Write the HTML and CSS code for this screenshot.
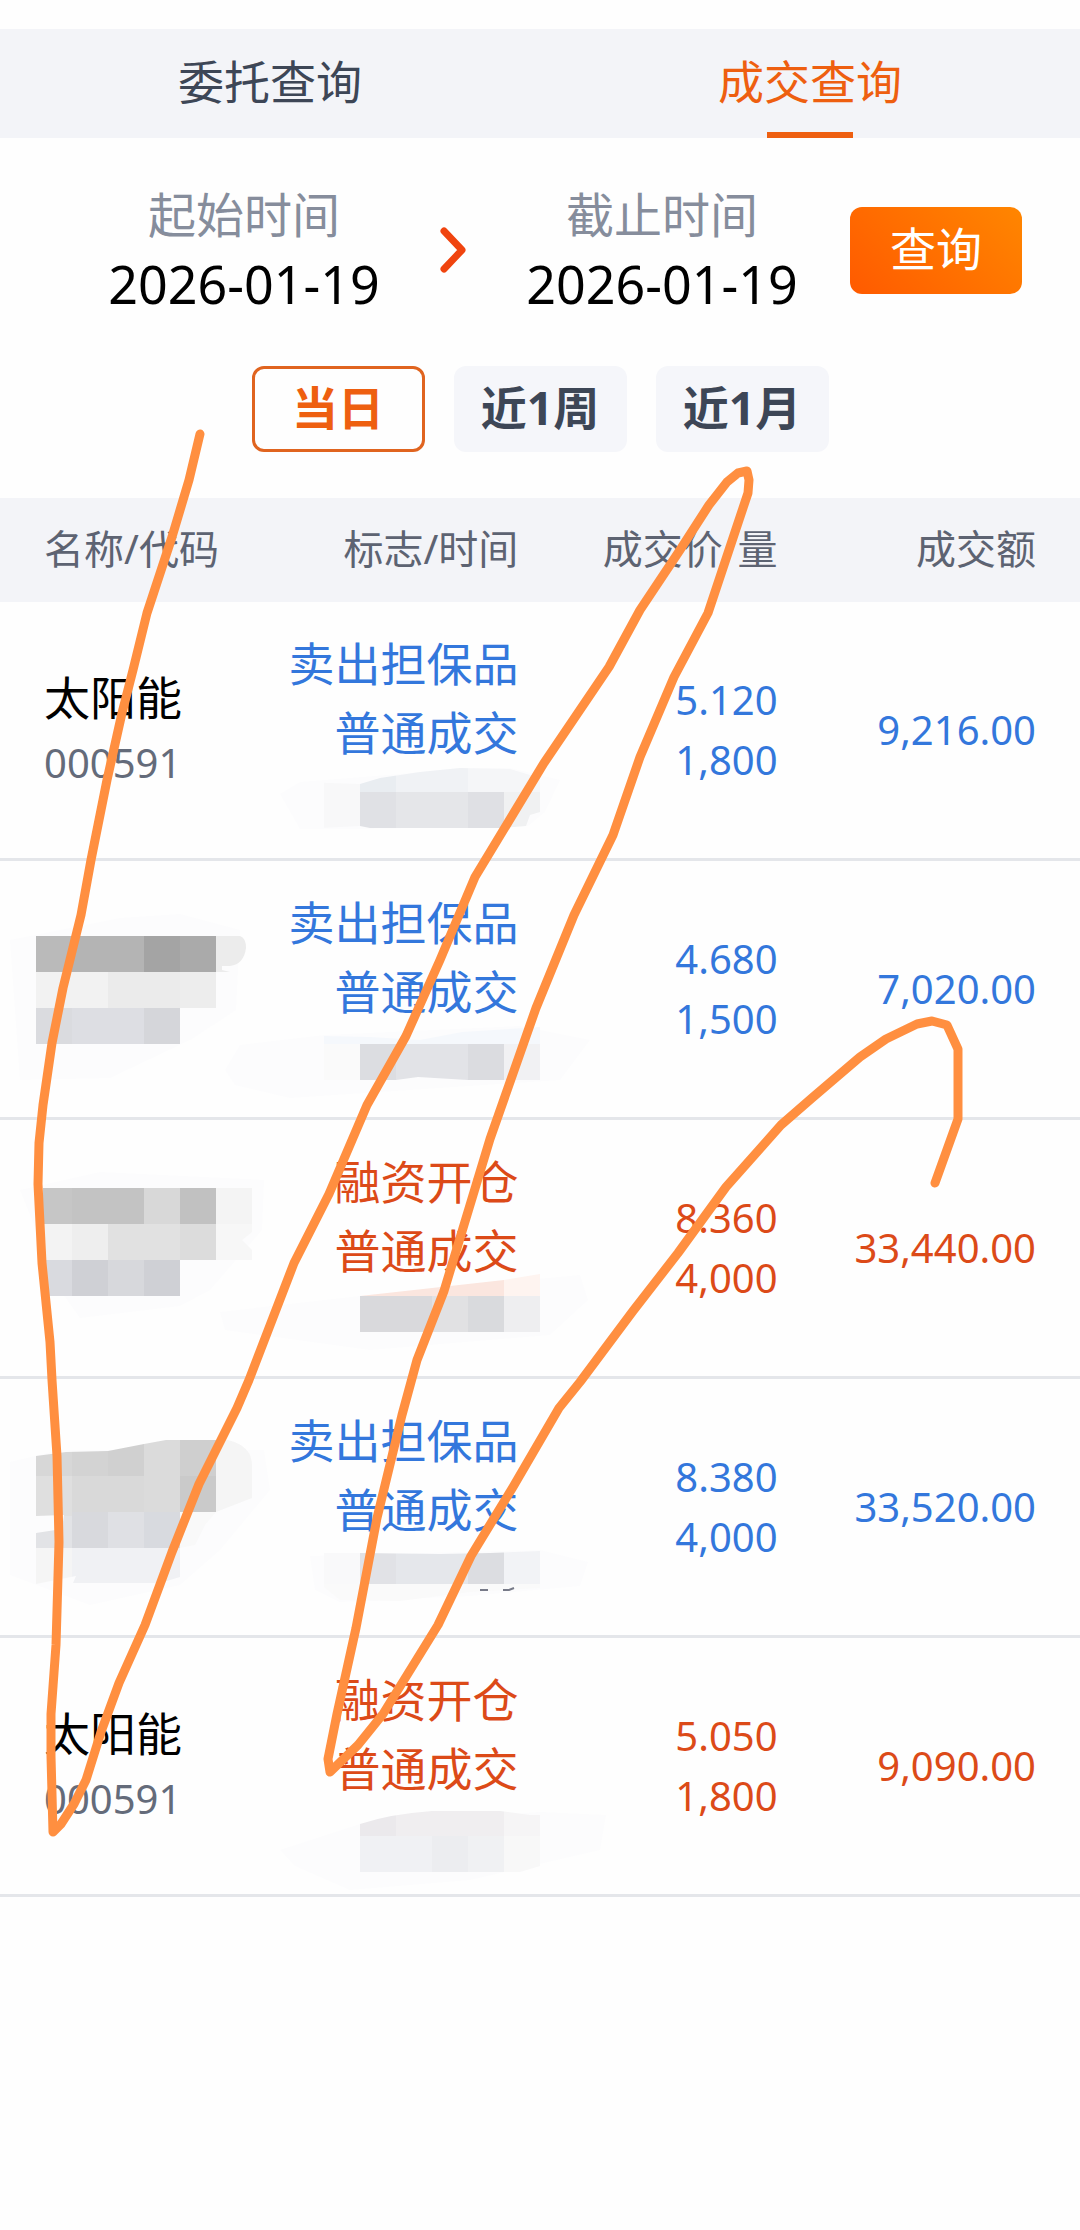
FILE: index.html
```html
<!DOCTYPE html>
<html lang="zh-CN">
<head>
  <meta charset="UTF-8">
  <meta name="viewport" content="width=device-width, initial-scale=1.0">
  <title>成交查询</title>
  <link rel="stylesheet" href="styles.css">
</head>
<body>
  <!-- Tabs -->
  <nav class="tabs">
    <a href="#entrust" class="tab">委托查询</a>
    <a href="#deal" class="tab active">成交查询</a>
  </nav>

  <!-- Date range form -->
  <form class="query">
    <div class="dates">
      <div class="date-field">
        <label for="startDate">起始时间</label>
        <input type="text" id="startDate" value="2026-01-19" readonly>
      </div>
      <svg class="arrow" viewBox="0 0 26 46" aria-hidden="true">
        <path d="M4 4 L22 23 L4 42" />
      </svg>
      <div class="date-field">
        <label for="endDate">截止时间</label>
        <input type="text" id="endDate" value="2026-01-19" readonly>
      </div>
    </div>
    <button type="button" class="submit">查询</button>
  </form>

  <div class="ranges">
    <button type="button" class="range selected">当日</button>
    <button type="button" class="range">近1周</button>
    <button type="button" class="range">近1月</button>
  </div>

  <!-- Deal list -->
  <table>
    <thead>
      <tr>
        <th class="col-name">名称/代码</th>
        <th class="col-flag">标志/时间</th>
        <th class="col-price">成交价/量</th>
        <th class="col-amount">成交额</th>
      </tr>
    </thead>
    <tbody>
      <tr class="sell">
        <td><div class="name">太阳能</div><div class="code">000591</div></td>
        <td><div class="flag">卖出担保品</div><div class="flag">普通成交</div><div class="time"></div></td>
        <td><div class="num">5.120</div><div class="num">1,800</div></td>
        <td><div class="num">9,216.00</div></td>
      </tr>
      <tr class="sell">
        <td></td>
        <td><div class="flag">卖出担保品</div><div class="flag">普通成交</div><div class="time"></div></td>
        <td><div class="num">4.680</div><div class="num">1,500</div></td>
        <td><div class="num">7,020.00</div></td>
      </tr>
      <tr class="buy">
        <td></td>
        <td><div class="flag">融资开仓</div><div class="flag">普通成交</div><div class="time"></div></td>
        <td><div class="num">8.360</div><div class="num">4,000</div></td>
        <td><div class="num">33,440.00</div></td>
      </tr>
      <tr class="sell">
        <td></td>
        <td><div class="flag">卖出担保品</div><div class="flag">普通成交</div><div class="time"></div></td>
        <td><div class="num">8.380</div><div class="num">4,000</div></td>
        <td><div class="num">33,520.00</div></td>
      </tr>
      <tr class="buy">
        <td><div class="name">太阳能</div><div class="code">000591</div></td>
        <td><div class="flag">融资开仓</div><div class="flag">普通成交</div><div class="time"></div></td>
        <td><div class="num">5.050</div><div class="num">1,800</div></td>
        <td><div class="num">9,090.00</div></td>
      </tr>
    </tbody>
  </table>

  <!-- Mosaic and pen marks lying over the list -->
  <svg class="marks" viewBox="0 0 1080 1900" aria-hidden="true">
    <defs>
      <clipPath id="clip1"><path d="M280 794 L300 782 L360 784 L380 778 L420 772 L460 768 L510 769 L540 778 V812 L530 815 L526 826 L500 828 H370 L360 826 L300 829 Z" /></clipPath>
      <clipPath id="clip4"><path d="M36 1456 L66 1452 L108 1451 L144 1444 L166 1440 H228 Q252 1446 252 1465 V1498 L216 1512 L205 1525 L195 1545 L180 1548 V1577 L160 1583 H73 L76 1576 L36 1584 V1533 L62 1529 L64 1515 L36 1516 Z" /></clipPath>
      <clipPath id="clip4b"><path d="M320 1553 H360 L440 1554 L490 1553 L540 1551 V1588 L470 1592 L400 1601 L340 1600 L320 1584 Z" /></clipPath>
      <clipPath id="clip5"><path d="M360 1824 Q390 1814 432 1811 H500 L530 1815 H540 V1866 L520 1872 H360 Z" /></clipPath>
    </defs>

    <g class="smear">
      <path d="M280 794 L300 782 L400 774 L460 768 H510 L560 780 L545 812 L528 826 L360 829 L300 829 Z" />
      <path d="M10 940 L120 918 L180 914 L240 930 L236 1010 L190 1040 L110 1078 L20 1080 Z" />
      <path d="M225 1070 L240 1045 L325 1035 L520 1026 L590 1040 L560 1080 L290 1098 L235 1085 Z" />
      <path d="M20 1190 L100 1172 L264 1180 L262 1230 L210 1290 L180 1306 L80 1318 L60 1290 Z" />
      <path d="M220 1312 L360 1296 L580 1275 L588 1300 L550 1335 L370 1350 L225 1330 Z" />
      <path d="M10 1462 L60 1450 L264 1450 L270 1490 L220 1550 L180 1585 L90 1605 L10 1575 Z" />
      <path d="M310 1556 L540 1550 L588 1562 L580 1586 L470 1596 L340 1602 L315 1590 Z" />
      <path d="M280 1850 L360 1824 L540 1812 L606 1815 L600 1850 L470 1880 L350 1890 L295 1866 Z" />
    </g>

    <g clip-path="url(#clip1)">
      <rect x="324" y="766" width="36" height="64" fill="#f8f8f9" />
      <rect x="360" y="766" width="36" height="26" fill="#e9edf1" />
      <rect x="396" y="766" width="72" height="26" fill="#f0f2f5" />
      <rect x="468" y="766" width="72" height="26" fill="#f5f6f8" />
      <rect x="360" y="792" width="36" height="36" fill="#e0e1e5" />
      <rect x="396" y="792" width="72" height="36" fill="#e5e6e9" />
      <rect x="468" y="792" width="36" height="36" fill="#dfe0e4" />
      <rect x="504" y="792" width="36" height="36" fill="#f0f1f2" />
    </g>

    <g>
      <rect x="36" y="936" width="36" height="36" fill="#bababa" />
      <rect x="72" y="936" width="72" height="36" fill="#b4b4b4" />
      <rect x="144" y="936" width="36" height="36" fill="#a4a4a4" />
      <rect x="180" y="936" width="36" height="36" fill="#aaaaaa" />
      <path d="M216 936 H240 Q246 938 246 948 Q244 964 230 966 L222 966 V970 L230 972 H216 Z" fill="#ececec" />
      <rect x="36" y="972" width="72" height="36" fill="#f2f2f2" />
      <rect x="108" y="972" width="72" height="36" fill="#ebebeb" />
      <rect x="180" y="972" width="36" height="36" fill="#ededed" />
      <rect x="36" y="1008" width="36" height="36" fill="#dadbdf" />
      <rect x="72" y="1008" width="72" height="36" fill="#dddee3" />
      <rect x="144" y="1008" width="36" height="36" fill="#d5d6da" />
      <path d="M324 1036 L370 1037 L420 1040 L462 1032 L540 1027 V1044 H324 Z" fill="#f5f8fc" />
      <rect x="324" y="1044" width="36" height="36" fill="#fafafa" />
      <rect x="360" y="1044" width="36" height="36" fill="#dcdde1" />
      <path d="M396 1044 H468 V1080 L418 1077 L396 1080 Z" fill="#e2e3e7" />
      <rect x="468" y="1044" width="36" height="36" fill="#dbdce0" />
      <rect x="504" y="1044" width="36" height="36" fill="#f1f1f3" />
    </g>

    <g>
      <rect x="43" y="1188" width="29" height="36" fill="#c6c6c6" />
      <rect x="72" y="1188" width="72" height="36" fill="#c3c3c3" />
      <rect x="144" y="1188" width="36" height="36" fill="#d8d8d8" />
      <rect x="180" y="1188" width="36" height="36" fill="#c1c1c1" />
      <rect x="216" y="1188" width="36" height="36" fill="#f4f4f4" />
      <rect x="43" y="1224" width="29" height="36" fill="#f3f3f3" />
      <rect x="72" y="1224" width="36" height="36" fill="#eeeeee" />
      <rect x="108" y="1224" width="72" height="36" fill="#e1e1e1" />
      <rect x="180" y="1224" width="36" height="36" fill="#dcdcdc" />
      <path d="M216 1224 H252 V1232 L242 1240 L252 1250 V1260 H216 Z" fill="#f7f7f7" />
      <rect x="43" y="1260" width="29" height="36" fill="#d9dadf" />
      <rect x="72" y="1260" width="36" height="36" fill="#cfd0d5" />
      <rect x="108" y="1260" width="36" height="36" fill="#d7d8dc" />
      <rect x="144" y="1260" width="36" height="36" fill="#cfd0d5" />
      <path d="M360 1296 L432 1288 L504 1280 V1296 Z" fill="#fbe6df" />
      <path d="M504 1280 L540 1274 V1296 H504 Z" fill="#fef4f0" />
      <rect x="360" y="1296" width="72" height="36" fill="#d9d9dc" />
      <rect x="432" y="1296" width="36" height="36" fill="#e1e1e3" />
      <rect x="468" y="1296" width="36" height="36" fill="#d9dadd" />
      <rect x="504" y="1296" width="36" height="36" fill="#eeeef0" />
    </g>

    <g clip-path="url(#clip4)">
      <rect x="36" y="1440" width="36" height="36" fill="#d7d7d7" />
      <rect x="72" y="1440" width="36" height="36" fill="#d3d3d3" />
      <rect x="108" y="1440" width="36" height="36" fill="#d0d0d0" />
      <rect x="144" y="1440" width="36" height="72" fill="#dbdbdb" />
      <rect x="180" y="1440" width="36" height="36" fill="#cfcfcf" />
      <rect x="216" y="1440" width="36" height="72" fill="#f5f5f5" />
      <rect x="36" y="1476" width="36" height="40" fill="#dfdfdf" />
      <rect x="72" y="1476" width="72" height="36" fill="#d9d9d9" />
      <rect x="180" y="1476" width="36" height="36" fill="#cacaca" />
      <rect x="36" y="1516" width="36" height="32" fill="#e2e3e6" />
      <rect x="72" y="1512" width="36" height="36" fill="#d8d9dd" />
      <rect x="108" y="1512" width="36" height="36" fill="#dfe0e4" />
      <rect x="144" y="1512" width="36" height="36" fill="#d8dadf" />
      <rect x="180" y="1512" width="36" height="36" fill="#f9f9f9" />
      <rect x="36" y="1548" width="36" height="36" fill="#f5f5f5" />
      <rect x="72" y="1548" width="108" height="36" fill="#f0f1f4" />
    </g>
    <g clip-path="url(#clip4b)">
      <rect x="324" y="1550" width="36" height="34" fill="#f9f9fa" />
      <rect x="360" y="1550" width="36" height="34" fill="#e1e2e6" />
      <rect x="396" y="1550" width="72" height="34" fill="#e5e7eb" />
      <rect x="468" y="1550" width="36" height="34" fill="#dcdde1" />
      <rect x="504" y="1550" width="36" height="34" fill="#f2f3f6" />
      <rect x="324" y="1584" width="216" height="18" fill="#fafafa" />
    </g>
    <path class="ink" d="M480 1590 L488 1590 M503 1590 L509 1590 L514 1588" />
    <g clip-path="url(#clip5)">
      <rect x="360" y="1810" width="36" height="26" fill="#ebe9ec" />
      <rect x="396" y="1810" width="108" height="26" fill="#f0eef0" />
      <rect x="504" y="1810" width="36" height="26" fill="#f6f5f6" />
      <rect x="360" y="1836" width="72" height="36" fill="#f0f1f4" />
      <rect x="432" y="1836" width="36" height="36" fill="#ecedf0" />
      <rect x="468" y="1836" width="36" height="36" fill="#f0f1f3" />
      <rect x="504" y="1836" width="36" height="36" fill="#f8f8f8" />
    </g>

    <polyline class="pen" points="200,434 189,480 172,537 147,613 133,670 122,713 107,780 91,860 81,915 63,988 52,1043 43,1105 39,1143 38,1184 42,1263 50,1342 52,1380 57,1456 59,1542 56,1645 51,1714 51,1756 53,1832 61,1824 74,1804 86,1780 101,1732 119,1683 145,1625 172,1552 199,1484 237,1408 249,1380 294,1263 329,1194 367,1105 406,1036 440,960 475,877 544,763 609,667 640,610 680,550 709,505 727,482 738,473 747,471 749,480 748,493 730,547 708,613 674,677 640,757 613,835 574,915 536,1008 490,1139 444,1291 417,1360 402,1415 377,1518 356,1628 337,1714 328,1759 330,1772 358,1745 383,1714 438,1625 471,1556 513,1487 559,1408 580,1382 633,1311 678,1253 726,1187 781,1125 812,1098 860,1057 886,1039 917,1024 932,1021 947,1025 958,1049 958,1119 935,1183" />
  </svg>
</body>
</html>
```
FILE: styles.css
```css
* {
  margin: 0;
  padding: 0;
  box-sizing: border-box;
}

body {
  position: relative;
  padding-top: 29px;
  background-color: #fefefe;
  color: #000;
  font-family: "Noto Sans", "Noto Sans CJK SC", sans-serif;
}

button,
input {
  border: none;
  background: none;
  font-family: inherit;
}

/* Tabs */
.tabs {
  display: flex;
  background-color: #f3f4f8;
}

.tab {
  position: relative;
  flex: 1;
  height: 109px;
  line-height: 104px;
  text-align: center;
  font-size: 46px;
  color: #3d4656;
  text-decoration: none;
}

.tab.active {
  color: #ee5f10;
}

.tab.active::after {
  content: "";
  position: absolute;
  bottom: 0;
  left: 50%;
  width: 86px;
  height: 6px;
  margin-left: -43px;
  background-color: #ee5f10;
}

/* Date range form */
.query {
  display: flex;
  align-items: center;
  padding: 44px 58px 0 56px;
}

.dates {
  flex: 1;
  display: flex;
  align-items: center;
}

.date-field {
  flex: 1;
  min-width: 0;
  display: flex;
  flex-direction: column;
  text-align: center;
}

.date-field label {
  font-size: 48px;
  line-height: 66px;
  color: #868d9c;
}

.date-field input {
  width: 100%;
  height: 70px;
  font-size: 52px;
  text-align: center;
  color: #000;
}

.arrow {
  width: 26px;
  height: 46px;
  margin: 0 8px;
}

.arrow path {
  fill: none;
  stroke: #f0440f;
  stroke-width: 7;
  stroke-linecap: round;
  stroke-linejoin: round;
}

.submit {
  width: 172px;
  height: 87px;
  border-radius: 12px;
  background: linear-gradient(45deg, #ff5a00, #ff8600);
  font-size: 46px;
  line-height: 82px;
  padding-bottom: 5px;
  color: #fff;
}

.ranges {
  display: flex;
  justify-content: center;
  gap: 29px;
  padding: 48px 0 46px;
}

.range {
  width: 173px;
  height: 86px;
  border-radius: 12px;
  background-color: #f5f6fa;
  font-size: 46px;
  font-weight: bold;
  padding-bottom: 8px;
  color: #3d4656;
}

.range.selected {
  border: 3px solid #e0641f;
  background-color: #fefefe;
  color: #ee5f10;
}

/* Deal list */
table {
  width: 100%;
  table-layout: fixed;
  border-spacing: 0;
}

th {
  height: 104px;
  padding-bottom: 6px;
  background-color: #f3f4f8;
  color: #5d6372;
  font-size: 40px;
  font-weight: normal;
}

th,
td {
  text-align: right;
  vertical-align: middle;
}

td {
  height: 259px;
  border-bottom: 3px solid #e4e6ea;
}

th:first-child,
td:first-child {
  padding-left: 44px;
  text-align: left;
}

th:last-child,
td:last-child {
  padding-right: 44px;
}

.col-name {
  width: 24%;
}

.col-flag {
  width: 24%;
}

.col-price {
  width: 24%;
}

.col-amount {
  width: 28%;
}

.sell {
  color: #3377dc;
}

.buy {
  color: #dc4a18;
}

.name {
  font-size: 46px;
  line-height: 66px;
  color: #000;
}

.code {
  font-size: 40px;
  line-height: 66px;
  color: #646b7a;
}

.flag {
  font-size: 46px;
  line-height: 69px;
}

.time {
  height: 64px;
}

.num {
  font-size: 40px;
  line-height: 60px;
}

/* Marks over the list */
.marks {
  position: absolute;
  top: 0;
  left: 0;
  width: 100%;
  pointer-events: none;
}

.smear {
  fill: #fcfcfd;
}

.ink {
  fill: none;
  stroke: #777a88;
  stroke-width: 2;
}

.pen {
  fill: none;
  stroke: #ff8f40;
  stroke-width: 9;
  stroke-linecap: round;
  stroke-linejoin: round;
}
```
